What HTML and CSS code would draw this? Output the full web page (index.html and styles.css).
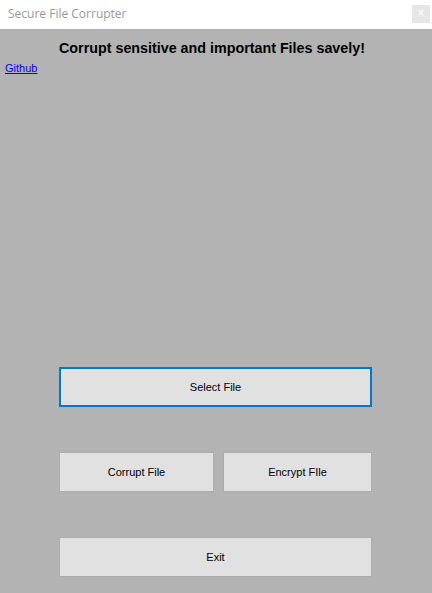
FILE: index.html
```html
<!DOCTYPE html>
<html>
<head>
<meta charset="utf-8">
<link rel="stylesheet" href="styles.css">
</head>
<body>
<div class="window">
  <div class="titlebar">
    <span class="title">Secure File Corrupter</span>
    <span class="close">×</span>
  </div>
  <div class="client">
    <h1 class="heading">Corrupt sensitive and important Files savely!</h1>
    <a class="link" href="#">Github</a>
    <div class="buttons">
      <button class="btn btn-focus">Select File</button>
      <div class="row">
        <button class="btn btn-left">Corrupt File</button>
        <button class="btn btn-right">Encrypt FIle</button>
      </div>
      <button class="btn">Exit</button>
    </div>
  </div>
</div>
</body>
</html>
```
FILE: styles.css
```css
html, body {
  margin: 0;
  padding: 0;
}
body {
  width: 432px;
  height: 593px;
  overflow: hidden;
  background: #b3b3b3;
  font-family: "Liberation Sans", Arial, sans-serif;
}
.window {
  display: flex;
  flex-direction: column;
  height: 593px;
}
.titlebar {
  height: 29px;
  background: #ffffff;
  display: flex;
  align-items: flex-start;
  justify-content: space-between;
  padding-left: 8px;
  box-sizing: border-box;
}
.title {
  font-family: "Open Sans", "Noto Sans", sans-serif;
  font-size: 12px;
  color: #9a9a9a;
  line-height: 16px;
  margin-top: 6px;
}
.close {
  width: 18px;
  height: 18px;
  margin-top: 5px;
  margin-right: 2px;
  background: #e6e6e6;
  color: #ffffff;
  font-size: 12px;
  line-height: 17px;
  text-align: center;
  font-family: "Liberation Sans", Arial, sans-serif;
}
.client {
  flex: 1;
  background: #b3b3b3;
  display: flex;
  flex-direction: column;
  align-items: flex-start;
}
.heading {
  margin: 10px 0 0 0;
  width: 424px;
  text-align: center;
  font-size: 14.3px;
  font-weight: bold;
  line-height: 18px;
  color: #000;
}
.link {
  margin: 4px 0 0 5px;
  font-size: 11px;
  line-height: 14px;
  color: #0000ff;
  text-decoration: underline;
}
.buttons {
  margin-top: 292px;
  margin-left: 59px;
  width: 313px;
  display: flex;
  flex-direction: column;
  gap: 45px;
}
.row {
  display: flex;
  justify-content: space-between;
}
.btn {
  height: 40px;
  width: 313px;
  background: #e1e1e1;
  border: 1px solid #adadad;
  font-family: "Liberation Sans", Arial, sans-serif;
  font-size: 11px;
  color: #000;
  padding: 0;
  margin: 0;
  box-sizing: border-box;
}
.btn-focus {
  border: 2px solid #0078d7;
}
.btn-left {
  width: 155px;
}
.btn-right {
  width: 149px;
}
```
